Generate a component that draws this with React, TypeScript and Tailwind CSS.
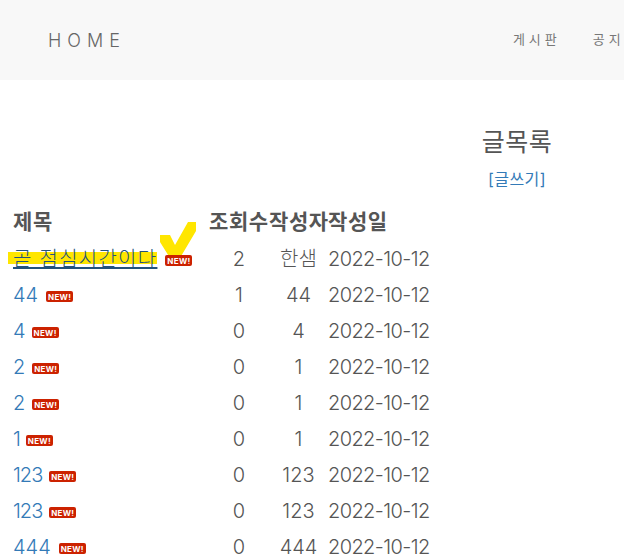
import React from 'react';

const posts = [
  { title: '곧 점심시간이다', views: 2, author: '한샘', active: true, badge: 'ml-2' },
  { title: '44', views: 1, author: '44', badge: 'ml-2' },
  { title: '4', views: 0, author: '4', badge: 'ml-[6px]' },
  { title: '2', views: 0, author: '1', badge: 'ml-[7px]' },
  { title: '2', views: 0, author: '1', badge: 'ml-[7px]' },
  { title: '1', views: 0, author: '1', badge: 'ml-[5px]' },
  { title: '123', views: 0, author: '123', badge: 'ml-[7px]', tight: true },
  { title: '123', views: 0, author: '123', badge: 'ml-[7px]', tight: true },
  { title: '444', views: 0, author: '444', badge: 'ml-2' },
];

const NewBadge = ({ className }: { className: string }) => (
  <span className={`${className} relative inline-flex h-[11px] w-[27px] items-center justify-center rounded-[2px] bg-[#cc2200] align-middle text-[8px] leading-none font-bold tracking-[0.3px] text-white`}>
    NEW!
  </span>
);

export default function App() {
  return (
    <div className="h-[560px] w-[624px] overflow-hidden bg-white font-['Inter','Noto_Sans_CJK_KR',sans-serif] text-[#555555]">
      <nav className="flex h-20 w-[720px] items-center bg-[#f8f8f8] pl-12">
        <a className="pt-[2px] text-lg font-light tracking-[6px] text-[#666666]">HOME</a>
        <ul className="ml-[387px] flex gap-[32px] text-[13px] tracking-[4px] text-[#777777]">
          <li>게시판</li>
          <li>공지</li>
        </ul>
      </nav>

      <div className="w-[1034px] pt-[49px] text-center">
        <h2 className="h-[36px] text-[25px] leading-[26px] font-normal tracking-[0.5px]">글목록</h2>
        <a className="mt-[3px] block leading-[22px] tracking-[0.4px] text-[#337ab7]">[글쓰기]</a>
      </div>

      <div className="relative mt-[14px] ml-[13px]">
        <svg className="absolute top-[17px] left-[147px] h-[38px] w-[37px]" viewBox="0 0 37 38">
          <path d="M0 14h10l5 10L28 1h8v9L20 37H10L0 21z" fill="#ffe600" />
        </svg>
        <table className="w-[417px] table-fixed border-collapse text-left text-xl">
          <thead>
            <tr className="h-[37px] text-[21px] leading-[36px] tracking-[0.6px] whitespace-nowrap">
              <th className="w-[196px] p-0 pb-px font-bold">제목</th>
              <th className="w-[60px] p-0 pb-px font-bold">조회수</th>
              <th className="w-[59px] p-0 pb-px font-bold">작성자</th>
              <th className="w-[102px] p-0 pb-px font-bold">작성일</th>
            </tr>
          </thead>
          <tbody className="font-light">
            {posts.map((post, i) => (
              <tr key={i} className="h-[36px]">
                <td className="p-0 whitespace-nowrap">
                  {post.active ? (
                    <span className="relative">
                      <span className="absolute top-[5px] left-[-5px] h-[12px] w-[149px] bg-[#ffe600]" />
                      <a className="relative text-[#23527c] underline decoration-2 underline-offset-[1px] [text-decoration-skip-ink:none] tracking-[1.25px]">{post.title}</a>
                    </span>
                  ) : (
                    <a className={post.tight ? 'tracking-[-1px] text-[#337ab7]' : 'text-[#337ab7]'}>{post.title}</a>
                  )}
                  <NewBadge className={post.badge} />
                </td>
                <td className="p-0 text-center">{post.views}</td>
                <td className="p-0 text-center">{post.author}</td>
                <td className="p-0 tracking-[-0.6px] whitespace-nowrap">2022-10-12</td>
              </tr>
            ))}
          </tbody>
        </table>
      </div>
    </div>
  );
}
